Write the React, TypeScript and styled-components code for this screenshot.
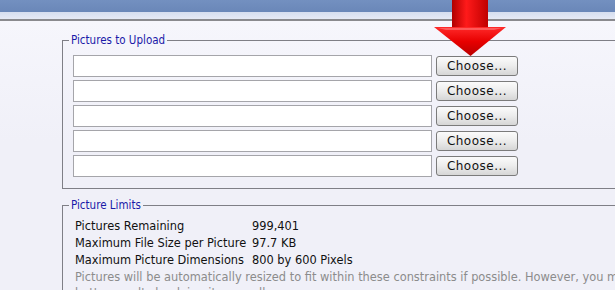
import React from "react";
import styled, { createGlobalStyle } from "styled-components";

const Global = createGlobalStyle`
  html, body { margin: 0; padding: 0; }
  body {
    width: 615px; height: 290px; overflow: hidden;
    background: #f1f1f9;
    font-family: "DejaVu Sans", Verdana, sans-serif;
  }
`;

const Page = styled.div`
  position: relative;
  width: 615px;
  height: 290px;
  overflow: hidden;
`;

const Header = styled.div`
  height: 12px;
  background: linear-gradient(#7390c0, #6a87b8);
`;

const SubHeader = styled.div`
  height: 7px;
  background: linear-gradient(#d6deef, #e6eaf5);
  border-bottom: 2px solid #8a8a8e;
`;

const Content = styled.div`
  padding: 12px 0 0 62px;
  width: 700px;
  background: linear-gradient(#f6f6fc, #f0f0f8 120px);
`;

const Fieldset = styled.fieldset<{ $mt?: number; $pt: number; $pb: number }>`
  margin: ${(p) => p.$mt ?? 0}px 0 0 0;
  padding: ${(p) => p.$pt}px 10px ${(p) => p.$pb}px 10px;
  border: 1px solid #7f7f86;
  border-radius: 0;
  width: 620px;
`;

const Legend = styled.legend`
  margin-left: -4px;
  padding: 0 2px;
  color: #1a1aa8;
  font-family: "DejaVu Sans Condensed", Tahoma, sans-serif;
  font-size: 11.5px;
  line-height: 14px;
`;

const Rows = styled.div`
  display: flex;
  flex-direction: column;
  gap: 3px;
`;

const Row = styled.div`
  display: flex;
  align-items: center;
  gap: 4px;
`;

const FileInput = styled.div`
  box-sizing: border-box;
  width: 359px;
  height: 22px;
  background: #fff;
  border: 1px solid #a5a5aa;
`;

const Button = styled.button`
  box-sizing: border-box;
  width: 82px;
  height: 20px;
  padding: 0;
  border: 1px solid #7b7b7b;
  border-radius: 3px;
  background: linear-gradient(#fbfbfb, #ececec 50%, #d6d6d6);
  font-family: "DejaVu Sans", Verdana, sans-serif;
  font-size: 12px;
  color: #111;
  letter-spacing: 0.5px;
`;

const Limits = styled.div`
  display: grid;
  grid-template-columns: 177px auto;
  padding-left: 2px;
  font-size: 11.4px;
  line-height: 17px;
  color: #111;
`;

const Note = styled.p`
  margin: 0;
  padding-left: 2px;
  width: 610px;
  font-size: 11.4px;
  line-height: 16px;
  color: #8c8c8c;
`;

const Arrow = styled.svg`
  position: absolute;
  left: 434px;
  top: 0;
`;

export default function App() {
  return (
    <Page>
      <Global />
      <Header />
      <SubHeader />
      <Content>
        <Fieldset $pt={8} $pb={11}>
          <Legend>Pictures to Upload</Legend>
          <Rows>
            {[0, 1, 2, 3, 4].map((i) => (
              <Row key={i}>
                <FileInput />
                <Button>Choose...</Button>
              </Row>
            ))}
          </Rows>
        </Fieldset>
        <Fieldset $mt={9} $pt={6} $pb={10}>
          <Legend>Picture Limits</Legend>
          <Limits>
            <span>Pictures Remaining</span>
            <span>999,401</span>
            <span>Maximum File Size per Picture</span>
            <span>97.7 KB</span>
            <span>Maximum Picture Dimensions</span>
            <span>800 by 600 Pixels</span>
          </Limits>
          <Note>
            Pictures will be automatically resized to fit within these constraints if possible. However, you may
            get better results by doing it manually.
          </Note>
        </Fieldset>
      </Content>
      <Arrow width="74" height="58" viewBox="0 0 74 58">
        <defs>
          <linearGradient id="shaft" x1="0" x2="1" y1="0" y2="0">
            <stop offset="0" stopColor="#b00000" />
            <stop offset="0.4" stopColor="#ff1a1a" />
            <stop offset="1" stopColor="#c00000" />
          </linearGradient>
          <linearGradient id="head" x1="0" x2="0" y1="0" y2="1">
            <stop offset="0" stopColor="#ff2a2a" />
            <stop offset="0.5" stopColor="#e80000" />
            <stop offset="1" stopColor="#b80000" />
          </linearGradient>
        </defs>
        <rect x="18" y="0" width="36" height="28" fill="url(#shaft)" />
        <polygon points="0,27 72,27 36.5,56" fill="url(#head)" />
        <polygon points="4,28 68,28 60,30 12,30" fill="#ff9090" opacity="0.5" />
      </Arrow>
    </Page>
  );
}
